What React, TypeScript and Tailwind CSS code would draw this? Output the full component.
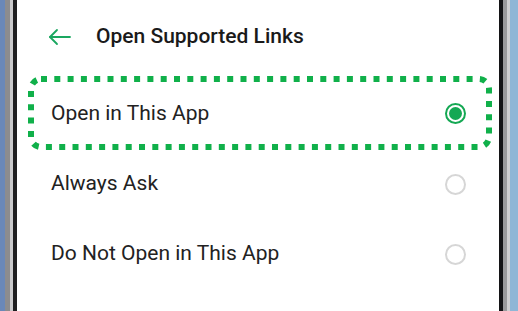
import React from 'react';

const options = [
  { label: 'Open in This App', selected: true },
  { label: 'Always Ask', selected: false },
  { label: 'Do Not Open in This App', selected: false },
];

function Radio({ selected }: { selected: boolean }) {
  if (selected) {
    return (
      <div className="w-[21px] h-[21px] rounded-full border-2 border-[#14a853] flex items-center justify-center">
        <div className="w-[13px] h-[13px] rounded-full bg-[#14a853]" />
      </div>
    );
  }
  return <div className="w-[21px] h-[21px] rounded-full border-2 border-[#d6d6d6]" />;
}

function DottedBox() {
  return (
    <svg className="absolute left-[11px] top-0 pointer-events-none" width="464" height="75" viewBox="0 0 464 75">
      <rect
        x="3"
        y="3"
        width="458"
        height="68"
        rx="10"
        fill="none"
        stroke="#10b04a"
        strokeWidth="6"
        strokeDasharray="6 7.3"
      />
    </svg>
  );
}

export default function App() {
  return (
    <div className="w-[518px] h-[311px] flex bg-white overflow-hidden" style={{ fontFamily: 'Roboto, "Noto Sans", sans-serif' }}>
      <div className="flex h-full">
        <div className="w-[5px] bg-[#6a88b8]" />
        <div className="w-[5px] bg-[#8c8c8e]" />
        <div className="w-[3px] bg-[#c9c9cb]" />
        <div className="w-[4px] bg-[#1e1e20]" />
      </div>

      <div className="flex-1 flex flex-col">
        <div className="h-[76px] flex items-center pl-[31px] gap-[24px] pb-[2px]">
          <svg width="24" height="18" viewBox="0 0 24 18" fill="none" stroke="#1aa760" strokeWidth="1.8" strokeLinecap="round" strokeLinejoin="round">
            <path d="M22 9H2" />
            <path d="M9 2L2 9l7 7" />
          </svg>
          <span className="text-[21px] font-medium text-[#1a1a1a]">Open Supported Links</span>
        </div>

        {options.map((o, i) => (
          <div key={o.label} className={`relative flex items-center justify-between pl-[34px] pr-[33px] ${i === 0 ? 'h-[72px] pt-[3px]' : 'h-[70px] pt-[2px]'}`}>
            {i === 0 && <DottedBox />}
            <span className="text-[21px] text-[#222222]">{o.label}</span>
            <Radio selected={o.selected} />
          </div>
        ))}
      </div>

      <div className="flex h-full">
        <div className="w-[4px] bg-[#141416]" />
        <div className="w-[4px] bg-[#9a9a9c]" />
        <div className="w-[3px] bg-[#d0d0d2]" />
        <div className="w-[8px] bg-[#8fb6d6]" />
      </div>
    </div>
  );
}
